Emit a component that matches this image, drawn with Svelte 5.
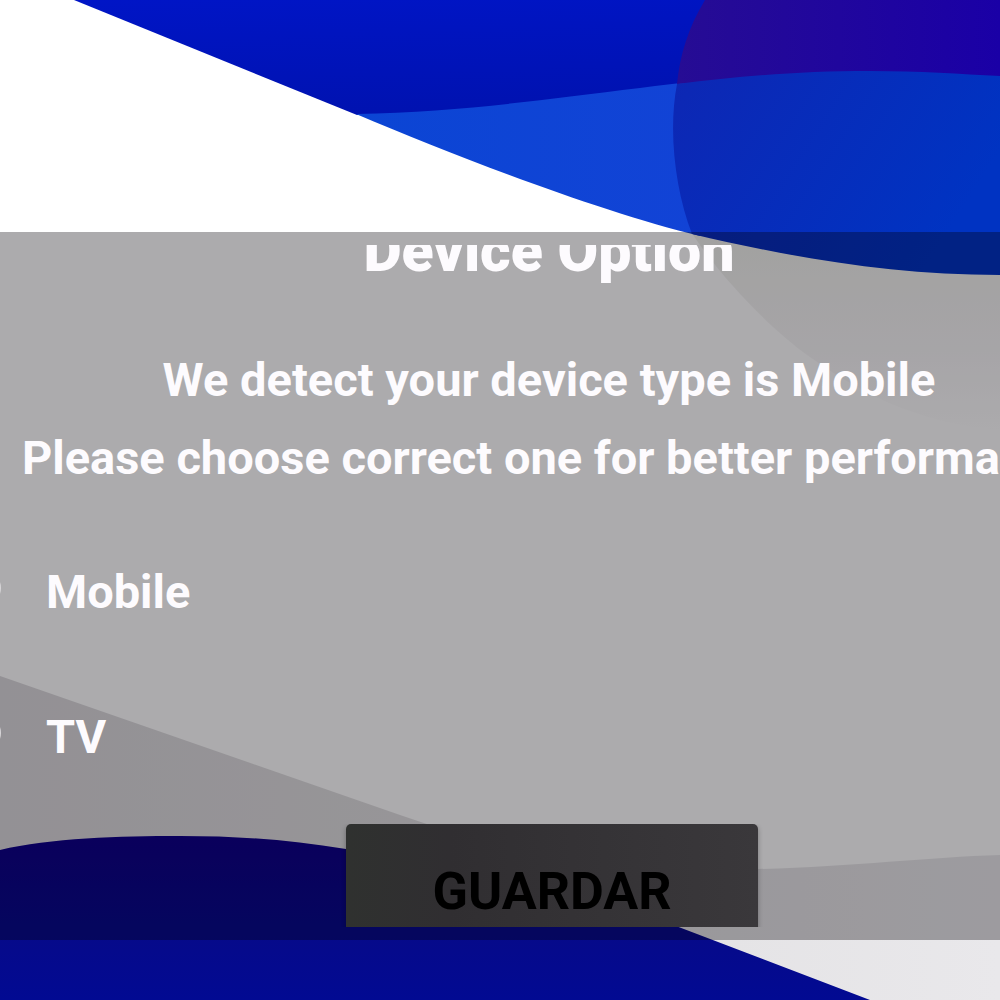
<script lang="ts">
  const devices = ['Mobile', 'TV'];
  let selected = '';
</script>

<div class="screen">
  <svg class="wallpaper" viewBox="0 0 1000 1000" preserveAspectRatio="none" aria-hidden="true">
    <defs>
      <linearGradient id="deep" x1="0" y1="0" x2="0.2" y2="1">
        <stop offset="0" stop-color="#0015c6" />
        <stop offset="1" stop-color="#0012b0" />
      </linearGradient>
      <linearGradient id="band" x1="0" y1="0" x2="1" y2="0">
        <stop offset="0" stop-color="#0b45d4" />
        <stop offset="1" stop-color="#1243d6" />
      </linearGradient>
      <linearGradient id="violet" x1="0" y1="0" x2="1" y2="0">
        <stop offset="0" stop-color="#260c94" />
        <stop offset="1" stop-color="#1a00a6" />
      </linearGradient>
      <linearGradient id="lens" x1="0" y1="0" x2="1" y2="0.4">
        <stop offset="0" stop-color="#0d27b4" />
        <stop offset="1" stop-color="#0033c2" />
      </linearGradient>
      <linearGradient id="haze" x1="0" y1="0" x2="0" y2="1">
        <stop offset="0" stop-color="#f0f1ec" />
        <stop offset="0.6" stop-color="#f7f6f7" />
        <stop offset="1" stop-color="#fff" />
      </linearGradient>
      <linearGradient id="wedge" x1="0" y1="0" x2="1" y2="0">
        <stop offset="0" stop-color="#dad8db" />
        <stop offset="0.4" stop-color="#e0dfe0" />
        <stop offset="1" stop-color="#e9e8eb" />
      </linearGradient>
      <linearGradient id="hill" x1="0" y1="0" x2="0" y2="1">
        <stop offset="0" stop-color="#0e0086" />
        <stop offset="0.6" stop-color="#060a8a" />
        <stop offset="1" stop-color="#020a92" />
      </linearGradient>
    </defs>

    <path fill="url(#haze)" d="M690 230 C715 270 765 325 810 357 C870 400 930 425 1000 430 V230Z" />
    <path
      fill="url(#wedge)"
      d="M0 676 L400 815 C520 857 640 870 758 869 C850 867 930 857 1000 855 V1000 H0Z"
    />
    <path
      fill="url(#hill)"
      d="M0 850 C50 838 120 836 180 836 C240 836 290 840 346 849 C480 863 600 896 676 926 L870 1000 H0Z"
    />

    <path fill="url(#deep)" d="M74 0 L357 115 L760 120 L760 0Z" />
    <path
      fill="url(#band)"
      d="M356 114 C460 112 540 100 640 88 C660 85 680 83 700 81 V236 C600 212 460 158 356 114Z"
    />
    <path fill="url(#violet)" d="M705 0 C688 28 680 55 677 84 L860 74 L1000 79 V0Z" />
    <path
      fill="url(#lens)"
      d="M677 84 C740 76 800 71 870 71 C920 71 960 74 1000 76 V275 C890 275 790 257 692 234 C675 190 668 130 677 84Z"
    />
  </svg>

  <form class="dialog" on:submit|preventDefault>
    <div class="dialog__content">
      <div class="dialog__header">
        <h1 class="dialog__title">Device Option</h1>
      </div>
      <p class="dialog__text">We detect your device type is Mobile</p>
      <p class="dialog__text">Please choose correct one for better performance</p>
      <div class="options">
        {#each devices as device}
          <label class="option">
            <input class="option__radio" type="radio" name="device" value={device} bind:group={selected} />
            <span>{device}</span>
          </label>
        {/each}
      </div>
      <div class="dialog__footer">
        <button class="save" type="submit">GUARDAR</button>
      </div>
    </div>
  </form>
</div>

<style>
  :global(body) {
    margin: 0;
    background: #fff;
  }

  .screen {
    position: relative;
    box-sizing: border-box;
    min-height: 100vh;
    padding: 232px 0 60px;
    overflow: hidden;
    font-family: Roboto, sans-serif;
    font-weight: 700;
  }

  .wallpaper {
    position: absolute;
    inset: 0;
    width: 100%;
    height: 100%;
  }

  .dialog {
    position: relative;
    padding: 13px 0;
    overflow: hidden;
    background: rgba(4, 0, 6, 0.33);
    color: #fdfbfe;
  }

  /* the dialog is wider than the screen and runs off its right edge */
  .dialog__content {
    margin-right: -98px;
  }

  /* the header only shows the lower part of the title */
  .dialog__header {
    display: flex;
    align-items: flex-end;
    justify-content: center;
    height: 40px;
    margin-bottom: 56px;
    overflow: hidden;
  }

  .dialog__title {
    margin: 0;
    font-size: 59px;
    font-weight: 900;
    line-height: 68px;
  }

  .dialog__text {
    margin: 0;
    font-size: 47px;
    line-height: 78px;
    text-align: center;
    white-space: nowrap;
  }

  .options {
    margin-top: 22px;
  }

  .option {
    display: flex;
    align-items: center;
    gap: 45px;
    height: 145px;
    margin-left: -33px;
    font-size: 47px;
  }

  .option__radio {
    appearance: none;
    box-sizing: border-box;
    flex: none;
    width: 34px;
    height: 34px;
    margin: 0 0 8px;
    border: 4px solid #d8d6d9;
    border-radius: 50%;
  }

  .dialog__footer {
    display: flex;
    justify-content: center;
    height: 103px;
    margin-top: 15px;
    padding-left: 6px;
    overflow: hidden;
  }

  .save {
    width: 412px;
    height: 134px;
    padding: 0;
    border: 0;
    border-radius: 5px;
    background: linear-gradient(90deg, #2f312f, #302e31 25%, #3a383b);
    box-shadow: 0 2px 5px rgba(0, 0, 0, 0.3);
    color: #000;
    font: 700 52px Roboto, sans-serif;
  }
</style>
